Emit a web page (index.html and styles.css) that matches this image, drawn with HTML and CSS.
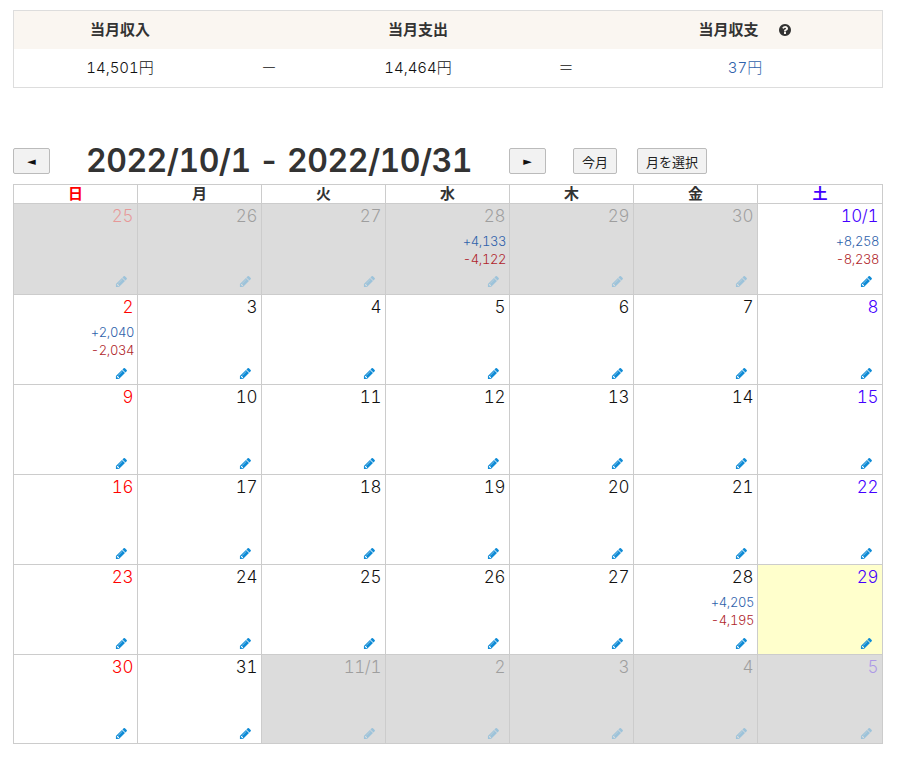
FILE: index.html
```html
<!DOCTYPE html>
<html lang="ja">
<head>
<meta charset="utf-8">
<title>カレンダー</title>
<link rel="stylesheet" href="styles.css">
</head>
<body>
<svg class="defs" width="0" height="0" aria-hidden="true">
  <symbol id="pencil" viewBox="0 0 1792 1792"><path d="M491 1536l91-91-235-235-91 91v107h128v128h107zm523-928q0-22-22-22-10 0-17 7l-542 542q-7 7-7 17 0 22 22 22 10 0 17-7l542-542q7-7 7-17zm-54-192l416 416-832 832h-416v-416zm683 96q0 53-37 90l-166 166-416-416 166-165q36-38 90-38 53 0 91 38l235 234q37 39 37 91z"/></symbol>
</svg>
<section class="summary">
  <div class="summary-head">
    <div class="c-in">当月収入</div><div class="c-op"></div><div class="c-out">当月支出</div><div class="c-op2"></div>
    <div class="c-bal">当月収支<svg class="help" viewBox="0 0 1792 1792"><path d="M1024 1376v-192q0-14-9-23t-23-9h-192q-14 0-23 9t-9 23v192q0 14 9 23t23 9h192q14 0 23-9t9-23zm256-672q0-88-55.500-163t-138.500-116-170-41q-243 0-371 213-15 24 8 42l132 100q7 6 19 6 16 0 25-12 53-68 86-92 34-24 86-24 48 0 85.500 26t37.500 59q0 38-20 61t-68 45q-63 28-115.500 86.500t-52.500 125.500v36q0 14 9 23t23 9h192q14 0 23-9t9-23q0-19 21.500-49.500t54.500-49.500q32-18 49-28.500t46-35 44.500-48 28-60.500 12.500-81zm384 192q0 209-103 385.500t-279.500 279.500-385.500 103-385.500-103-279.500-279.500-103-385.500 103-385.500 279.500-279.500 385.500-103 385.500 103 279.500 279.500 103 385.500z"/></svg></div>
  </div>
  <div class="summary-body">
    <div class="c-in">14,501円</div><div class="c-op">ー</div><div class="c-out">14,464円</div><div class="c-op2">＝</div><div class="c-bal positive">37円</div>
  </div>
</section>
<div class="toolbar">
  <button class="btn arrow">◄</button>
  <h1 class="range">2022/10/1 - 2022/10/31</h1>
  <button class="btn arrow">►</button>
  <button class="btn today">今月</button>
  <button class="btn pick">月を選択</button>
</div>
<table class="cal">
  <thead><tr><th class="sun">日</th><th>月</th><th>火</th><th>水</th><th>木</th><th>金</th><th class="sat">土</th></tr></thead>
  <tbody>
    <tr class="first">
      <td class="other sun"><div class="cell"><span class="day">25</span><a class="edit"><svg><use href="#pencil"/></svg></a></div></td>
      <td class="other"><div class="cell"><span class="day">26</span><a class="edit"><svg><use href="#pencil"/></svg></a></div></td>
      <td class="other"><div class="cell"><span class="day">27</span><a class="edit"><svg><use href="#pencil"/></svg></a></div></td>
      <td class="other"><div class="cell"><span class="day">28</span><span class="plus">+4,133</span><span class="minus">-4,122</span><a class="edit"><svg><use href="#pencil"/></svg></a></div></td>
      <td class="other"><div class="cell"><span class="day">29</span><a class="edit"><svg><use href="#pencil"/></svg></a></div></td>
      <td class="other"><div class="cell"><span class="day">30</span><a class="edit"><svg><use href="#pencil"/></svg></a></div></td>
      <td class="sat"><div class="cell"><span class="day">10/1</span><span class="plus">+8,258</span><span class="minus">-8,238</span><a class="edit"><svg><use href="#pencil"/></svg></a></div></td>
    </tr>
    <tr>
      <td class="sun"><div class="cell"><span class="day">2</span><span class="plus">+2,040</span><span class="minus">-2,034</span><a class="edit"><svg><use href="#pencil"/></svg></a></div></td>
      <td><div class="cell"><span class="day">3</span><a class="edit"><svg><use href="#pencil"/></svg></a></div></td>
      <td><div class="cell"><span class="day">4</span><a class="edit"><svg><use href="#pencil"/></svg></a></div></td>
      <td><div class="cell"><span class="day">5</span><a class="edit"><svg><use href="#pencil"/></svg></a></div></td>
      <td><div class="cell"><span class="day">6</span><a class="edit"><svg><use href="#pencil"/></svg></a></div></td>
      <td><div class="cell"><span class="day">7</span><a class="edit"><svg><use href="#pencil"/></svg></a></div></td>
      <td class="sat"><div class="cell"><span class="day">8</span><a class="edit"><svg><use href="#pencil"/></svg></a></div></td>
    </tr>
    <tr>
      <td class="sun"><div class="cell"><span class="day">9</span><a class="edit"><svg><use href="#pencil"/></svg></a></div></td>
      <td><div class="cell"><span class="day">10</span><a class="edit"><svg><use href="#pencil"/></svg></a></div></td>
      <td><div class="cell"><span class="day">11</span><a class="edit"><svg><use href="#pencil"/></svg></a></div></td>
      <td><div class="cell"><span class="day">12</span><a class="edit"><svg><use href="#pencil"/></svg></a></div></td>
      <td><div class="cell"><span class="day">13</span><a class="edit"><svg><use href="#pencil"/></svg></a></div></td>
      <td><div class="cell"><span class="day">14</span><a class="edit"><svg><use href="#pencil"/></svg></a></div></td>
      <td class="sat"><div class="cell"><span class="day">15</span><a class="edit"><svg><use href="#pencil"/></svg></a></div></td>
    </tr>
    <tr>
      <td class="sun"><div class="cell"><span class="day">16</span><a class="edit"><svg><use href="#pencil"/></svg></a></div></td>
      <td><div class="cell"><span class="day">17</span><a class="edit"><svg><use href="#pencil"/></svg></a></div></td>
      <td><div class="cell"><span class="day">18</span><a class="edit"><svg><use href="#pencil"/></svg></a></div></td>
      <td><div class="cell"><span class="day">19</span><a class="edit"><svg><use href="#pencil"/></svg></a></div></td>
      <td><div class="cell"><span class="day">20</span><a class="edit"><svg><use href="#pencil"/></svg></a></div></td>
      <td><div class="cell"><span class="day">21</span><a class="edit"><svg><use href="#pencil"/></svg></a></div></td>
      <td class="sat"><div class="cell"><span class="day">22</span><a class="edit"><svg><use href="#pencil"/></svg></a></div></td>
    </tr>
    <tr>
      <td class="sun"><div class="cell"><span class="day">23</span><a class="edit"><svg><use href="#pencil"/></svg></a></div></td>
      <td><div class="cell"><span class="day">24</span><a class="edit"><svg><use href="#pencil"/></svg></a></div></td>
      <td><div class="cell"><span class="day">25</span><a class="edit"><svg><use href="#pencil"/></svg></a></div></td>
      <td><div class="cell"><span class="day">26</span><a class="edit"><svg><use href="#pencil"/></svg></a></div></td>
      <td><div class="cell"><span class="day">27</span><a class="edit"><svg><use href="#pencil"/></svg></a></div></td>
      <td><div class="cell"><span class="day">28</span><span class="plus">+4,205</span><span class="minus">-4,195</span><a class="edit"><svg><use href="#pencil"/></svg></a></div></td>
      <td class="sat today-cell"><div class="cell"><span class="day">29</span><a class="edit"><svg><use href="#pencil"/></svg></a></div></td>
    </tr>
    <tr class="last">
      <td class="sun"><div class="cell"><span class="day">30</span><a class="edit"><svg><use href="#pencil"/></svg></a></div></td>
      <td><div class="cell"><span class="day">31</span><a class="edit"><svg><use href="#pencil"/></svg></a></div></td>
      <td class="other"><div class="cell"><span class="day">11/1</span><a class="edit"><svg><use href="#pencil"/></svg></a></div></td>
      <td class="other"><div class="cell"><span class="day">2</span><a class="edit"><svg><use href="#pencil"/></svg></a></div></td>
      <td class="other"><div class="cell"><span class="day">3</span><a class="edit"><svg><use href="#pencil"/></svg></a></div></td>
      <td class="other"><div class="cell"><span class="day">4</span><a class="edit"><svg><use href="#pencil"/></svg></a></div></td>
      <td class="other sat"><div class="cell"><span class="day">5</span><a class="edit"><svg><use href="#pencil"/></svg></a></div></td>
    </tr>
  </tbody>
</table>
</body>
</html>
```

FILE: styles.css
```css
* { box-sizing: border-box; }
html, body { margin: 0; background: #fff; }
body {
  padding: 10px 15px 0 13px;
  font-family: Inter, "Noto Sans CJK JP", sans-serif;
  font-variant-numeric: tabular-nums;
  color: #333;
  font-size: 15px;
}
.defs { position: absolute; }

.summary { border: 1px solid #ddd; height: 78px; }
.summary-head, .summary-body {
  display: grid;
  grid-template-columns: 212px 86px 212px 84px 1fr;
  height: 38px;
  align-items: center;
  text-align: center;
}
.summary-head { background: #faf6f1; font-weight: bold; font-size: 15px; line-height: 36px; }
.summary-body { font-size: 15px; font-weight: 300; line-height: 36px; color: #111; }
.help { width: 14px; height: 14px; fill: #333; margin-left: 19px; vertical-align: -2px; }
.summary-body .positive { color: #2f62ab; }

.toolbar { display: flex; align-items: center; height: 26px; margin-top: 60px; }
.range { margin: 0; padding: 0 37px 0 36px; font-size: 32px; font-weight: 600; letter-spacing: -.5px; line-height: 26px; white-space: nowrap; color: #333; }
.btn {
  height: 26px;
  padding: 0;
  font: 13px "Noto Sans CJK JP", sans-serif;
  color: #222;
  background: #f2f2f2;
  border: 1px solid #bbb;
  border-radius: 2px;
}
.arrow { width: 37px; font: 11px "DejaVu Sans", sans-serif; color: #111; }
.today { width: 44px; margin-left: 27px; }
.pick { width: 70px; margin-left: 20px; }

.cal { margin-top: 10px; width: 870px; border-collapse: collapse; table-layout: fixed; }
.cal th, .cal td { border: 1px solid #ccc; padding: 0; }
.cal th { width: 124px; height: 19px; font-size: 15px; line-height: 18px; color: #333; }
.cal th.sat { width: auto; color: #40f; }
.cal th.sun { color: #f00; }
.cal td { height: 90px; vertical-align: top; }
.cal tr.first td { height: 91px; }
.cal tr.last td { height: 89px; }
.cell { display: flex; flex-direction: column; align-items: flex-end; height: 89px; padding: 1px 4px 0 0; }
.first .cell { height: 90px; }
.last .cell { height: 88px; }
.day { font-size: 17px; font-weight: 300; line-height: 22px; letter-spacing: -.4px; margin-bottom: 5px; color: #111; }
.sun .day { color: #f00; }
.sat .day { color: #40f; }
.plus, .minus { font-size: 13px; font-weight: 300; line-height: 18px; letter-spacing: -.4px; margin-right: -1px; }
.plus { color: #2f62ab; }
.minus { color: #b01f2c; }
.edit { margin-top: auto; margin-right: 5px; margin-bottom: 4px; height: 13px; }
.first .edit { margin-bottom: 6px; }
.last .edit { margin-bottom: 3px; }
.edit svg { display: block; width: 13px; height: 13px; fill: #0e8bd6; }
.other { background: #dcdcdc; }
.other .day, .other .edit { opacity: .3; }
.today-cell { background: #ffc; }
```
